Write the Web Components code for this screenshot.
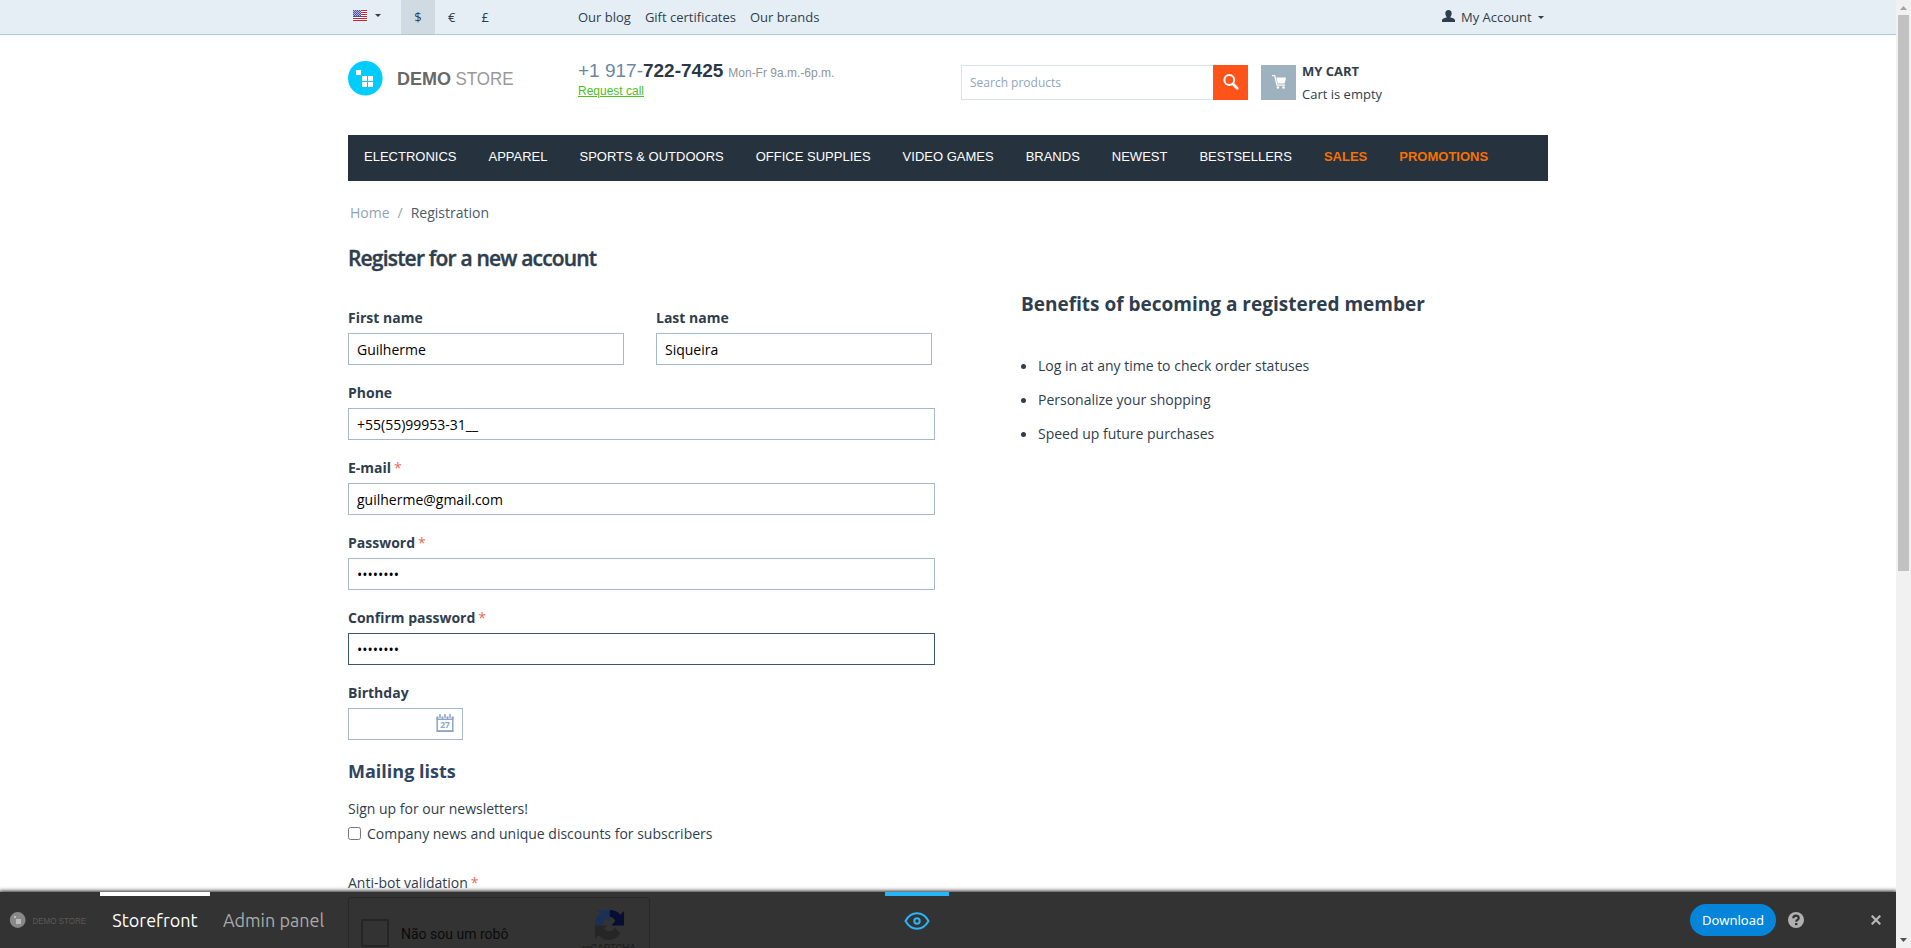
<!DOCTYPE html>
<html lang="en">
<head>
<meta charset="utf-8">
<title>Demo Store - Registration</title>
<style>
html,body{margin:0;height:100%;overflow:hidden;background:#fff}
body{font:14px/20px "Open Sans","Noto Sans",sans-serif;color:#2f3e4e}
</style>
</head>
<body>
<store-page></store-page>
<script>
const define=(name,html)=>customElements.define(name,class extends HTMLElement{
  constructor(){super();this.attachShadow({mode:'open'}).innerHTML=html;}
});
const caret='<svg class="caret" width="6" height="3" viewBox="0 0 6 3"><path d="M0 0h6L3 3z" fill="currentColor"/></svg>';

define('top-bar',`<style>
:host{display:block;height:34px;background:#e5eef4;border-bottom:1px solid #a9ccda;font-size:13px;line-height:34px}
.in{width:1200px;margin:auto;display:flex;height:34px}
.lang{width:53px;display:flex;align-items:flex-start;box-sizing:border-box;padding:10px 0 0 5px}
.lang .caret{margin:4px 0 0 8px}
.cur{width:33.500px;text-align:center}.on{width:34px;background:#cfdae3}
nav{margin-left:75px;width:865px;box-sizing:border-box;padding-left:1px;display:flex;gap:14px;white-space:nowrap}
.acc{display:flex;align-items:flex-start;white-space:nowrap}.acc .txt{margin:0 6px 0 6px}.acc .caret{margin-top:16px}.acc .u{margin-top:10px}
</style><div class="in"><div class="lang"><svg width="14" height="12" viewBox="0 0 14 12"><path fill="#fff" d="M0 0h14v11H0z"/><path stroke="#c9252f" stroke-width="1" d="M0 .5h14M0 2.5h14M0 4.5h14M0 6.5h14M0 8.5h14M0 10.5h14"/><path fill="#4a4fa5" d="M0 0h8v7H0z"/><path stroke="#b8bce0" stroke-width="1" stroke-dasharray="1 1" d="M1 .5h7M0 1.5h8M1 2.5h7M0 3.5h8M1 4.5h7M0 5.5h8"/></svg>${caret}</div>
<div class="cur on">$</div><div class="cur">€</div><div class="cur">£</div>
<nav><span>Our blog</span><span>Gift certificates</span><span>Our brands</span></nav>
<div class="acc"><svg class="u" width="13" height="12" viewBox="0 0 13 12"><path fill="#2f3e4e" d="M6.5 0C8.500 0 9.700 1.400 9.700 3.300 9.700 5 8.700 6.800 8 7.300c2 .7 4.600 1.100 5 2.700V12H0v-2c.4-1.600 3-2 5-2.700-.7-.5-1.700-2.300-1.700-4C3.300 1.400 4.500 0 6.500 0z"/></svg><span class="txt">My Account</span>${caret}</div></div>`);

define('store-logo',`<style>:host{display:block}svg{display:block;overflow:visible}</style>
<svg width="170" height="36" viewBox="0 0 170 36"><circle cx="17.300" cy="17.300" r="17.300" fill="#0cf"/><g fill="#fff"><path d="M8 9h5v5H8zM14 15h5v5h-5zM20 15h5v5h-5zM14 21h5v5h-5zM20 21h5v5h-5z"/></g>
<g font-family="Liberation Sans" font-size="19"><text x="49" y="24" font-weight="bold" fill="#686868" textLength="54" lengthAdjust="spacingAndGlyphs">DEMO</text><text x="107.500" y="24" fill="#999" textLength="58" lengthAdjust="spacingAndGlyphs">STORE</text></g></svg>`);

define('store-header',`<style>
:host{display:flex;width:1200px;height:100px;margin:auto}
store-logo{width:230px;padding-top:26px}
.ph{width:383px;padding-top:25px;font:12px/20px "Liberation Sans",Arial,sans-serif;color:#8f959c}
.ph div{height:16px;line-height:24px;white-space:nowrap;display:flex;align-items:baseline}
.ph b,.ph i{font-size:19px;font-style:normal;color:#2c3846;line-height:22px}.ph i{color:#6c87a6}
.ph small{font-size:12px;margin-left:5px}.ph a{display:block;color:#4dbf20;text-decoration:underline;margin-top:5px;line-height:20px}
.s{margin-top:30px;display:flex;height:35px}
.q{box-sizing:border-box;width:252px;border:1px solid #dbdfe6;border-right:0;padding-left:8px;line-height:33px;color:#92a5bd;font-size:12px}
.b{width:35px;background:#ff5319;display:grid;place-items:center}.b svg{position:relative;top:-1px}.c{background:#9eb1be;margin-left:13px}
.m{font-size:13px;line-height:23px;margin:-5px 0 0 6px;white-space:nowrap}.m b{display:block}
</style><store-logo></store-logo>
<div class="ph"><div><i>+1 917-</i><b>722-7425</b><small>Mon-Fr 9a.m.-6p.m.</small></div><a>Request call</a></div>
<div class="s"><div class="q">Search products</div><div class="b"><svg width="16" height="16" viewBox="0 0 16 16" fill="none" stroke="#fff"><circle cx="6.300" cy="6" r="4.900" stroke-width="2"/><path d="M10 10l4.200 4.200" stroke-width="2.800" stroke-linecap="round"/></svg></div>
<div class="b c"><svg width="16" height="16" viewBox="0 0 16 16"><path d="M1 1.700h2.700l2.300 9.500h8" fill="none" stroke="#fff" stroke-width="1.200"/><path fill="#fff" d="M5.300 3.500h9.700l-1.300 6H6.800z"/><circle cx="7" cy="13.500" r="1.300" fill="#fff"/><circle cx="12.500" cy="13.500" r="1.300" fill="#fff"/></svg></div>
<div class="m"><b>MY CART</b>Cart is empty</div></div>`);

define('main-menu',`<style>:host{display:flex;width:1200px;height:46px;margin:auto;background:#26323e;color:#fff;font:13px/43px "Liberation Sans",Arial,sans-serif;padding-left:16px;box-sizing:border-box;gap:32px;white-space:nowrap}b{color:#f77002}</style>
<span>ELECTRONICS</span><span>APPAREL</span><span>SPORTS &amp; OUTDOORS</span><span>OFFICE SUPPLIES</span><span>VIDEO GAMES</span><span>BRANDS</span><span>NEWEST</span><span>BESTSELLERS</span><b>SALES</b><b>PROMOTIONS</b>`);

customElements.define('form-field',class extends HTMLElement{
  connectedCallback(){
    const a=n=>this.getAttribute(n);
    this.attachShadow({mode:'open'}).innerHTML=`<style>
:host{display:block;height:75px;width:${a('w')||587}px}
.l{font-weight:bold;line-height:20px;height:25px}.l i{font-style:normal;color:#ee6a5b;font-weight:normal;margin-left:3px}
.i{box-sizing:border-box;height:32px;border:1px solid ${this.hasAttribute('focused')?'#3c566d':'#a6b9cb'};padding:0 8px 0 8px;color:#000;line-height:32px;display:flex;justify-content:space-between}
</style><div class="l">${a('label')}${this.hasAttribute('required')?'<i>*</i>':''}</div><div class="i"><span>${a('value')||''}</span><slot></slot></div>`;
  }
});
define('calendar-icon',`<style>:host{display:block;padding-top:5px}svg{display:block}</style><svg width="18" height="19" viewBox="0 0 18 19"><path fill="none" stroke="#8ea6c0" stroke-width="1.500" d="M1.200 3v14h15.600V3"/><path fill="#8ea6c0" d="M.5 2.500h17V6H.5zM.5 16.500h17V18H.5z"/><path d="M4 0v5M9 0v5M14 0v5" stroke="#fff" stroke-width="3"/><path d="M4 0v4.500M9 0v4.500M14 0v4.500" stroke="#8ea6c0" stroke-width="1.500"/><text x="9" y="14.200" text-anchor="middle" font-family="Open Sans" font-weight="bold" font-size="8.500" fill="#8ea6c0">27</text></svg>`);

define('register-form',`<style>
:host{display:block;width:587px}
.crumb{display:flex;padding:21px 0 0 2px;line-height:22px;color:#8fa4b8}.crumb b{font-weight:normal;color:#4b5a69}.crumb i{font-style:normal;margin:0 8px}
h1{font-size:21px;font-weight:600;line-height:28px;margin:20px 0 0;height:64px;letter-spacing:-.82px;white-space:nowrap;-webkit-text-stroke:.4px currentColor}
.row{display:flex;gap:32px}
h2{font-size:18px;line-height:26px;color:#304560;margin:0}
p{margin:15px 0 0;line-height:20px}
.ck{display:flex;gap:6px;line-height:20px;margin-top:5px}.ck input{margin:3px 0 0;width:13px;height:13px}
.ab{margin-top:29px}.ab i{font-style:normal;color:#ee6a5b;margin-left:3px}
</style><div class="crumb">Home<i>/</i><b>Registration</b></div><h1>Register for a new account</h1>
<div class="row"><form-field w="276" label="First name" value="Guilherme"></form-field><form-field w="276" label="Last name" value="Siqueira"></form-field></div>
<form-field label="Phone" value="+55(55)99953-31__"></form-field>
<form-field required label="E-mail" value="guilherme@gmail.com"></form-field>
<form-field required label="Password" value="••••••••"></form-field>
<form-field required focused label="Confirm password" value="••••••••"></form-field>
<form-field w="115" label="Birthday"><calendar-icon></calendar-icon></form-field>
<h2>Mailing lists</h2><p>Sign up for our newsletters!</p>
<div class="ck"><input type="checkbox"><span>Company news and unique discounts for subscribers</span></div>
<div class="ab">Anti-bot validation<i>*</i></div>`);

define('member-benefits',`<style>:host{display:block}h2{font-size:19px;line-height:26px;margin:0 0 32px;white-space:nowrap}
ul{list-style:none;margin:0;padding:0}li{height:34px;line-height:34px;display:flex;align-items:center}li:before{content:"";width:5px;height:5px;border-radius:50%;background:#2f3e4e;margin-right:12px}</style>
<h2>Benefits of becoming a registered member</h2><ul><li>Log in at any time to check order statuses</li><li>Personalize your shopping</li><li>Speed up future purchases</li></ul>`);

define('robot-check',`<style>:host{display:flex;box-sizing:border-box;width:302px;height:78px;margin:5px 0 0 348px;border:1px solid #282828;border-radius:3px;color:#0b0b0b;font:14px/16px Roboto,sans-serif}
.b{box-sizing:border-box;width:28px;height:28px;border:2px solid #252525;border-radius:2px;margin:21px 0 0 12px}
span{margin:28px 0 0 12px;width:181px;white-space:nowrap}.l{text-align:center;font-size:10px;color:#1c1c1c;padding-top:11px;line-height:12px}.l svg{display:block;margin:0 auto 3px}</style>
<div class="b"></div><span>Não sou um robô</span><div class="l"><svg width="31" height="31" viewBox="0 0 32 32"><path fill="#070d33" d="M16 1c5 0 9 2 11 5l4-4v15H18l4-5c-1.500-2.500-3.500-4-6-4z"/><path fill="#1b3055" d="M1 17C1 11 3 7 7 5L3 1h13v12l-3.500-3.500C10 11 9 13 9 17z"/><path fill="#262626" d="M1 17v14l4-4c3 3.500 7 5.500 12 5 4-.500 8-3 10-7l-6-6c-1 3-3 4-5 4-3 0-4-1-6-3l4-3z"/></svg>reCAPTCHA</div>`);

define('admin-bar',`<style>
:host{position:absolute;left:0;bottom:0;width:1896px;height:56px;background:#333;box-shadow:0 0 4px 1px #222;font:18px/56px Ubuntu,"Noto Sans",sans-serif;color:#aaa}
.bar{position:absolute;inset:0;display:flex}
.clip{position:absolute;inset:0;overflow:hidden}
.logo{width:100px;display:flex;align-items:center}
.tab{box-sizing:border-box;height:56px;border-top:4px solid transparent;line-height:49px;white-space:nowrap}
.a{width:110px;text-align:center;border-color:#fff;color:#fff}.p{width:127px;text-align:center}
.eye{width:64px;border-color:#29b6f6;margin-left:548px}.eye svg{display:block;margin:16px auto 0}
.dl{width:86px;height:32px;border-radius:16px;background:#0485d9;color:#fff;font:13px/32px "Noto Sans",sans-serif;text-align:center;margin:12px 12px 0 741px}
.h{margin:20px 67px 0 0;width:16px;height:16px}.x{width:10px;height:10px;margin-top:23px}
</style><div class="clip"><robot-check></robot-check></div><div class="bar"><div class="logo"><svg width="100" height="56"><circle cx="17.700" cy="28" r="7.900" fill="#888"/><path fill="#bbb" d="M14 24h2v2h-2zM16 27h5v5h-5z"/><text x="32.500" y="31.500" font-family="Liberation Sans" font-size="9.500" fill="#5a5a5a" textLength="53.500" lengthAdjust="spacingAndGlyphs">DEMO STORE</text></svg></div>
<div class="tab a">Storefront</div><div class="tab p">Admin panel</div><div class="tab eye"><svg width="26" height="18" viewBox="0 0 26 18" fill="none" stroke="#29b6f6" stroke-width="2"><path d="M1.500 9C4 4.500 8 1.300 13 1.300S22 4.500 24.500 9C22 13.500 18 16.700 13 16.700S4 13.500 1.500 9z"/><circle cx="13" cy="9" r="2.700"/></svg></div>
<div class="dl">Download</div><svg class="h" viewBox="0 0 16 16"><circle cx="8" cy="8" r="8" fill="#b0b0b0"/><path d="M5.300 6.300c0-3.500 5.400-3.300 5.400-.4 0 1.900-2.500 1.900-2.500 3.800" fill="none" stroke="#333" stroke-width="2.200"/><path fill="#333" d="M7 11h2.400v2.200H7z"/></svg>
<svg class="x" viewBox="0 0 10 10"><path d="M.7.700l8.600 8.600M9.300.700L.7 9.300" stroke="#b8b8b8" stroke-width="2.200"/></svg></div>`);

define('scroll-bar',`<style>:host{position:absolute;right:0;top:0;width:15px;height:948px;background:#f1f1f1;display:flex;flex-direction:column;align-items:center}
.t{width:11px;height:556px;background:#c1c1c1;margin-top:5px}svg{display:block}.u{margin-top:6px}.d{margin-top:auto;margin-bottom:6px}</style>
<svg class="u" width="7" height="4"><path d="M0 4L3.500 0 7 4z" fill="#a3a3a3"/></svg><div class="t"></div><svg class="d" width="7" height="4"><path d="M0 0h7L3.500 4z" fill="#505050"/></svg>`);

define('store-page',`<style>:host{display:block;position:relative;height:948px;overflow:hidden}.page{width:1896px}.content{width:1200px;margin:auto;display:flex;align-items:flex-start}member-benefits{margin:110px 0 0 86px}</style>
<div class="page"><top-bar></top-bar><store-header></store-header><main-menu></main-menu><div class="content"><register-form></register-form><member-benefits></member-benefits></div></div><admin-bar></admin-bar><scroll-bar></scroll-bar>`);
</script>
</body>
</html>
